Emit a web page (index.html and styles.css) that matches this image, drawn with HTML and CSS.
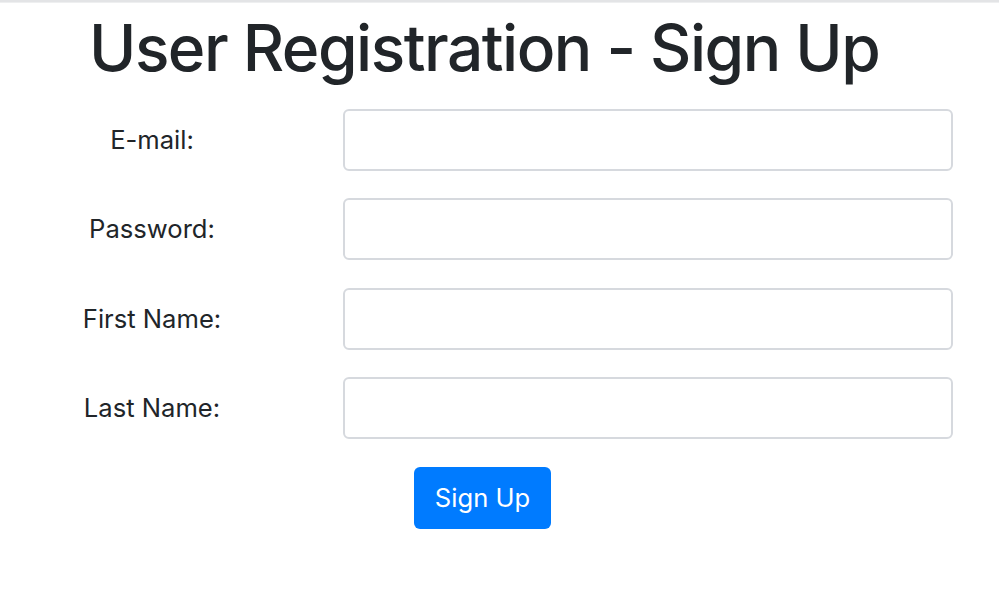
FILE: index.html
```html
<!DOCTYPE html>
<html lang="en">
<head>
<meta charset="utf-8">
<title>User Registration - Sign Up</title>
<link rel="stylesheet" href="styles.css">
</head>
<body>
<div class="topline"></div>
<main class="page">
  <h1 class="title">User Registration - Sign Up</h1>
  <form class="form">
    <label class="label" for="email">E-mail:</label>
    <input class="field" id="email" type="email">
    <label class="label" for="pw">Password:</label>
    <input class="field" id="pw" type="password">
    <label class="label" for="fn">First Name:</label>
    <input class="field" id="fn" type="text">
    <label class="label" for="ln">Last Name:</label>
    <input class="field" id="ln" type="text">
    <div class="actions">
      <button class="btn" type="button">Sign Up</button>
    </div>
  </form>
</main>
</body>
</html>
```
FILE: styles.css
```css
* { box-sizing: border-box; }
html, body { margin: 0; padding: 0; background: #fff; }
body {
  font-family: Inter, "Liberation Sans", Arial, sans-serif;
  color: #212529;
}
.topline {
  height: 3px;
  background: #e3e4e6;
  border-bottom: 1px solid #eeeff0;
}
.page {
  padding: 0 46px 0 40px;
}
.title {
  margin: 6px 0 0 49px;
  font-size: 64px;
  font-weight: 500;
  line-height: 77px;
  letter-spacing: -1.5px;
}
.form {
  display: grid;
  grid-template-columns: 224px 610px;
  column-gap: 79px;
  row-gap: 27.4px;
  margin-top: 23px;
  align-items: center;
}
.label {
  text-align: center;
  font-size: 25.6px;
  line-height: 38px;
}
.field {
  height: 62px;
  width: 610px;
  border: 2px solid #d6d9de;
  border-radius: 6px;
  background: #fff;
  outline: none;
}
.actions {
  grid-column: 2;
  padding-left: 71px;
}
.btn {
  height: 62px;
  width: 137px;
  border: none;
  border-radius: 6px;
  background: #007bff;
  color: #fff;
  font-family: Inter, "Liberation Sans", Arial, sans-serif;
  font-size: 25.6px;
  font-weight: 400;
}
```
